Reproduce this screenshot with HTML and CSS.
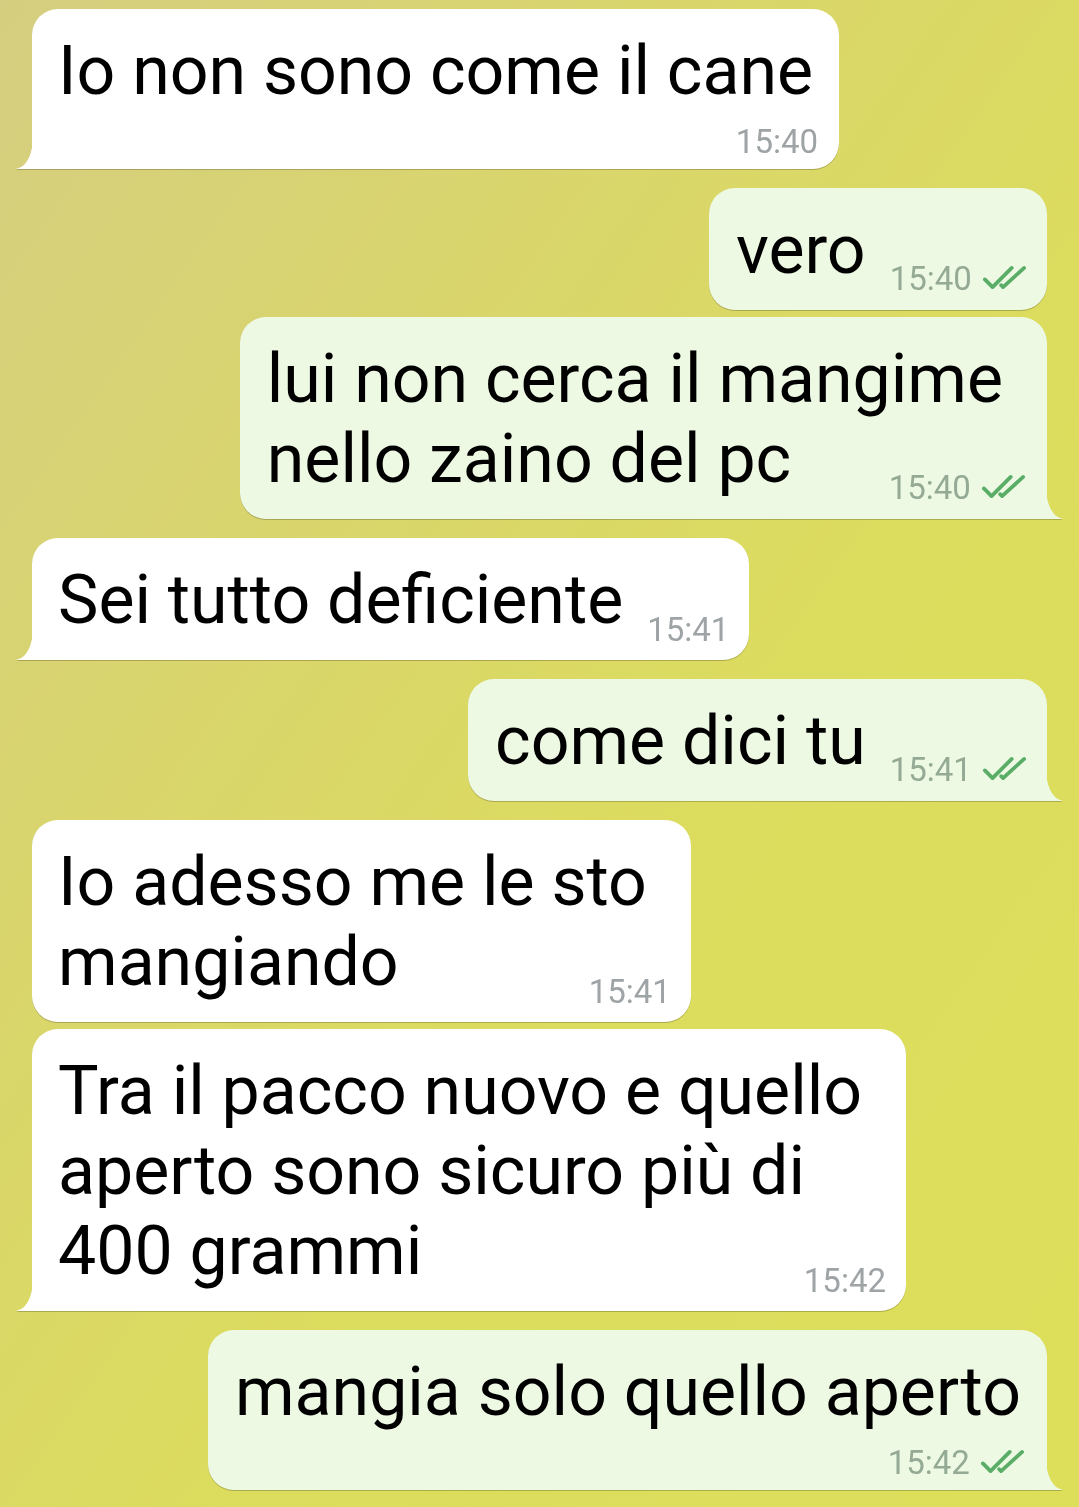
FILE: index.html
```html
<!DOCTYPE html>
<html lang="it">
<head>
  <meta charset="UTF-8">
  <meta name="viewport" content="width=device-width, initial-scale=1.0">
  <title>Chat</title>
  <link rel="stylesheet" href="styles.css">
</head>
<body>

  <div class="chat">
    <div class="msg in tail meta-below">
      <p class="text">Io non sono come il cane<span class="meta">15:40</span></p>
    </div>

    <div class="msg out group">
      <p class="text">vero<span class="meta">15:40 <svg class="ticks" viewBox="0 0 48 26"><path d="M3 15 L11 23 L31 3 M20 21 L22 23 L44 3"/></svg></span></p>
    </div>
    <div class="msg out tail next multi">
      <p class="text">lui non cerca il mangime<br>nello zaino del pc<span class="meta">15:40 <svg class="ticks" viewBox="0 0 48 26"><path d="M3 15 L11 23 L31 3 M20 21 L22 23 L44 3"/></svg></span></p>
    </div>

    <div class="msg in tail group">
      <p class="text">Sei tutto deficiente<span class="meta">15:41</span></p>
    </div>

    <div class="msg out tail group">
      <p class="text">come dici tu<span class="meta">15:41 <svg class="ticks" viewBox="0 0 48 26"><path d="M3 15 L11 23 L31 3 M20 21 L22 23 L44 3"/></svg></span></p>
    </div>

    <div class="msg in group multi">
      <p class="text">Io adesso me le sto<br>mangiando<span class="meta">15:41</span></p>
    </div>
    <div class="msg in tail next multi">
      <p class="text">Tra il pacco nuovo e quello<br>aperto sono sicuro più di<br>400 grammi<span class="meta">15:42</span></p>
    </div>

    <div class="msg out tail group meta-below">
      <p class="text">mangia solo quello aperto<span class="meta">15:42 <svg class="ticks" viewBox="0 0 48 26"><path d="M3 15 L11 23 L31 3 M20 21 L22 23 L44 3"/></svg></span></p>
    </div>
  </div>

</body>
</html>
```

FILE: styles.css
```css
body {
  margin: 0;
  min-height: 1507px;
  background: linear-gradient(125deg, #d5ce80 0%, #d9d56d 30%, #dcdc5e 60%, #dddf5a 100%);
  font-family: Roboto, "Noto Sans", sans-serif;
  color: #000;
}

.chat {
  display: flex;
  flex-direction: column;
  padding: 9px 32px 15px;
}

.msg {
  position: relative;
  width: fit-content;
  max-width: 875px;
  padding: 22px 26px 20px 26px;
  border-radius: 26px;
  filter: drop-shadow(0 1px 0.6px rgba(0, 0, 0, 0.22));
}

.msg.group {
  margin-top: 19px;
}

.msg.next {
  margin-top: 7px;
}

.msg.in {
  align-self: flex-start;
  background: #fff;
}

.msg.out {
  align-self: flex-end;
  background: #eef9e4;
  padding-left: 27px;
}

/* tail at the bottom corner of the last bubble of a group */
.msg.in.tail {
  border-bottom-left-radius: 0;
}

.msg.out.tail {
  border-bottom-right-radius: 0;
}

.msg.tail::before {
  content: "";
  position: absolute;
  bottom: 0;
  width: 17px;
  height: 30px;
}

.msg.in.tail::before {
  left: -16px;
  background: radial-gradient(17px 30px at 0 0, transparent 96%, #fff 100%);
  border-bottom-left-radius: 2px;
}

.msg.out.tail::before {
  right: -16px;
  background: radial-gradient(17px 30px at 100% 0, transparent 96%, #eef9e4 100%);
  border-bottom-right-radius: 2px;
}

.text {
  margin: 0;
  font-size: 68px;
  line-height: 80px;
}

.meta {
  float: right;
  margin: 58px -6px -4px 24px;
  font-size: 33px;
  line-height: 24px;
  color: #9ea3a5;
  white-space: nowrap;
}

.out .meta {
  color: #94aa95;
  margin-top: 55px;
  margin-right: -7px;
}

.ticks {
  width: 46px;
  height: 25px;
  margin-left: 2px;
  fill: none;
  stroke: #5aad66;
  stroke-width: 3.9;
  stroke-linecap: round;
  stroke-linejoin: round;
}

.multi {
  padding-right: 44px;
}

.msg.multi .meta {
  margin-right: -24px;
}

.meta-below .meta {
  float: none;
  display: block;
  text-align: right;
  margin: 16px -5px -8px 0;
  line-height: 30px;
}
```
